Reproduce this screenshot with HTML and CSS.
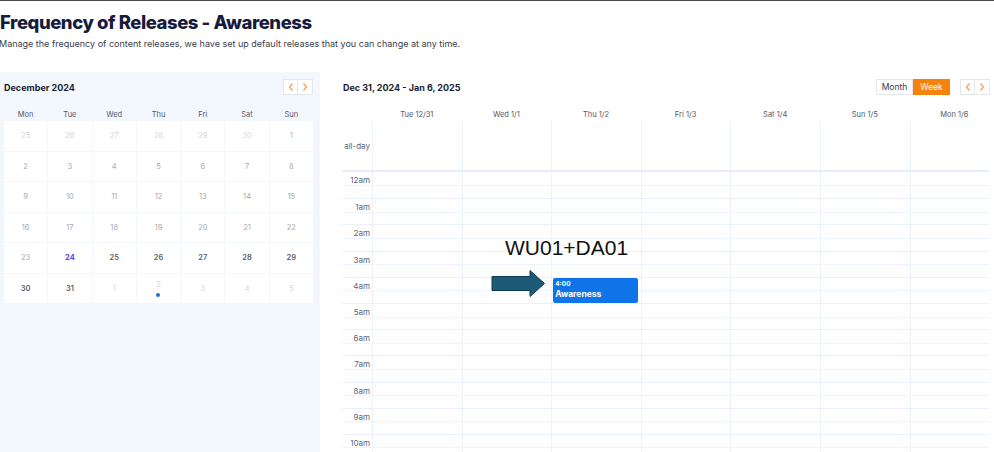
FILE: index.html
```html
<!DOCTYPE html>
<html lang="en">
<head>
    <meta charset="UTF-8">
    <title>Frequency of Releases - Awareness</title>
    <link rel="stylesheet" href="styles.css">
</head>
<body>
    <div class="page">
        <header class="intro">
            <h1>Frequency of Releases - Awareness</h1>
            <p>Manage the frequency of content releases, we have set up default releases that you can change at any time.</p>
        </header>

        <div class="layout">
            <!-- month picker -->
            <aside class="mini">
                <div class="mini-head">
                    <span class="mini-title">December 2024</span>
                    <div class="arrows">
                        <button class="arrow"><svg viewBox="0 0 10 10"><polyline points="6.5,1.5 3.5,5 6.5,8.5"/></svg></button>
                        <button class="arrow"><svg viewBox="0 0 10 10"><polyline points="3.5,1.5 6.5,5 3.5,8.5"/></svg></button>
                    </div>
                </div>
                <div class="mini-days">
                    <span>Mon</span><span>Tue</span><span>Wed</span><span>Thu</span><span>Fri</span><span>Sat</span><span>Sun</span>
                </div>
                <div class="mini-grid">
                    <div class="day other">25</div><div class="day other">26</div><div class="day other">27</div><div class="day other">28</div><div class="day other">29</div><div class="day other">30</div><div class="day past">1</div>
                    <div class="day past">2</div><div class="day past">3</div><div class="day past">4</div><div class="day past">5</div><div class="day past">6</div><div class="day past">7</div><div class="day past">8</div>
                    <div class="day past">9</div><div class="day past">10</div><div class="day past">11</div><div class="day past">12</div><div class="day past">13</div><div class="day past">14</div><div class="day past">15</div>
                    <div class="day past">16</div><div class="day past">17</div><div class="day past">18</div><div class="day past">19</div><div class="day past">20</div><div class="day past">21</div><div class="day past">22</div>
                    <div class="day past">23</div><div class="day today">24</div><div class="day">25</div><div class="day">26</div><div class="day">27</div><div class="day">28</div><div class="day">29</div>
                    <div class="day">30</div><div class="day">31</div><div class="day other">1</div><div class="day other has-event">2<i class="dot"></i></div><div class="day other">3</div><div class="day other">4</div><div class="day other">5</div>
                </div>
            </aside>

            <!-- week view -->
            <section class="week">
                <div class="week-head">
                    <span class="week-title">Dec 31, 2024 - Jan 6, 2025</span>
                    <div class="toggle">
                        <button class="view">Month</button>
                        <button class="view active">Week</button>
                    </div>
                    <div class="arrows">
                        <button class="arrow"><svg viewBox="0 0 10 10"><polyline points="6.5,1.5 3.5,5 6.5,8.5"/></svg></button>
                        <button class="arrow"><svg viewBox="0 0 10 10"><polyline points="3.5,1.5 6.5,5 3.5,8.5"/></svg></button>
                    </div>
                </div>

                <div class="cols">
                    <span></span><span>Tue 12/31</span><span>Wed 1/1</span><span>Thu 1/2</span><span>Fri 1/3</span><span>Sat 1/4</span><span>Sun 1/5</span><span>Mon 1/6</span>
                </div>

                <div class="grid">
                    <div class="row allday">
                        <span class="label">all-day</span><i></i><i></i><i></i><i></i><i></i><i></i><i></i>
                    </div>
                    <div class="hours">
                        <div class="row hour"><span class="label">12am</span><i></i><i></i><i></i><i></i><i></i><i></i><i></i></div>
                        <div class="row hour"><span class="label">1am</span><i></i><i></i><i></i><i></i><i></i><i></i><i></i></div>
                        <div class="row hour"><span class="label">2am</span><i></i><i></i><i></i><i></i><i></i><i></i><i></i></div>
                        <div class="row hour"><span class="label">3am</span><i></i><i></i><i></i><i></i><i></i><i></i><i></i></div>
                        <div class="row hour"><span class="label">4am</span><i></i><i></i>
                            <i class="slot">
                                <div class="event">
                                    <span class="event-time">4:00</span>
                                    <span class="event-name">Awareness</span>
                                </div>
                            </i>
                            <i></i><i></i><i></i><i></i></div>
                        <div class="row hour"><span class="label">5am</span><i></i><i></i><i></i><i></i><i></i><i></i><i></i></div>
                        <div class="row hour"><span class="label">6am</span><i></i><i></i><i></i><i></i><i></i><i></i><i></i></div>
                        <div class="row hour"><span class="label">7am</span><i></i><i></i><i></i><i></i><i></i><i></i><i></i></div>
                        <div class="row hour"><span class="label">8am</span><i></i><i></i><i></i><i></i><i></i><i></i><i></i></div>
                        <div class="row hour"><span class="label">9am</span><i></i><i></i><i></i><i></i><i></i><i></i><i></i></div>
                        <div class="row hour"><span class="label">10am</span><i></i><i></i><i></i><i></i><i></i><i></i><i></i></div>
                    </div>
                </div>

                <!-- callout drawn over the grid -->
                <div class="callout">WU01+DA01</div>
                <svg class="pointer" viewBox="0 0 55 29">
                    <polygon points="1,7.5 39,7.5 39,1.5 53.5,14.5 39,27.5 39,21.5 1,21.5"/>
                </svg>
            </section>
        </div>
    </div>
</body>
</html>
```

FILE: styles.css
```css
* {
    box-sizing: border-box;
}
body {
    margin: 0;
    width: 994px;
    height: 452px;
    overflow: hidden;
    background: #fff;
    font-family: Inter, "Open Sans", sans-serif;
    color: #333;
}
.page {
    border-top: 1px solid #4a4a4a;
}
.intro {
    padding: 9px 0 0 0;
    height: 71px;
}
h1 {
    margin: 0;
    font-size: 18.5px;
    font-weight: 800;
    letter-spacing: -0.45px;
    color: #161b3d;
    line-height: 24px;
}
.intro p {
    margin: 4px 0 0 -1px;
    font-size: 9px;
    line-height: 12px;
    color: #3b3d4c;
}
.layout {
    display: flex;
}
button {
    font-family: inherit;
    cursor: pointer;
}

/* mini month */
.mini {
    width: 320px;
    height: 380px;
    background: #f2f7fe;
    padding: 7px 7px 0 4px;
}
.mini-head {
    display: flex;
    align-items: center;
    justify-content: space-between;
    height: 16px;
}
.mini-title {
    font-size: 9px;
    font-weight: 700;
    color: #1b1d33;
}
.arrows {
    display: flex;
}
.arrow {
    width: 15px;
    height: 16px;
    padding: 0;
    background: #fff;
    border: 1px solid #e4e7ec;
    display: flex;
    align-items: center;
    justify-content: center;
}
.arrow + .arrow {
    border-left: none;
}
.arrow svg {
    width: 10px;
    height: 10px;
    fill: none;
    stroke: #f7a25a;
    stroke-width: 1.3;
}
.mini-days {
    display: grid;
    grid-template-columns: repeat(7, 1fr);
    gap: 1px;
    height: 26px;
    align-items: end;
    padding-bottom: 2px;
    width: 309px;
}
.mini-days span {
    text-align: center;
    font-size: 7.5px;
    color: #555a6e;
}
.mini-grid {
    display: grid;
    grid-template-columns: repeat(7, 1fr);
    grid-auto-rows: 29.5px;
    gap: 1px;
    width: 309px;
}
.day {
    background: #fff;
    display: flex;
    flex-direction: column;
    align-items: center;
    justify-content: center;
    font-size: 7.5px;
    font-weight: 600;
    color: #5e5e66;
}
.day.past {
    color: #a9a9ae;
    font-weight: 400;
}
.day.other {
    color: #d6d6da;
    font-weight: 400;
}
.day.today {
    color: #5a48e0;
    font-weight: 700;
}
.day.has-event {
    justify-content: flex-start;
    padding-top: 6px;
}
.dot {
    width: 4px;
    height: 4px;
    margin-top: 4px;
    border-radius: 50%;
    background: #1a6fe6;
}

/* week view */
.week {
    position: relative;
    flex: 1;
    padding: 7px 0 0 22px;
}
.week-head {
    display: flex;
    align-items: center;
    height: 16px;
    width: 648px;
}
.week-title {
    font-size: 9px;
    font-weight: 700;
    color: #1b1d33;
    margin-left: 1px;
    flex: 1;
}
.toggle {
    display: flex;
    margin-right: 10px;
}
.view {
    width: 37px;
    height: 16px;
    padding: 0;
    font-size: 8.5px;
    background: #fff;
    color: #3a3a46;
    border: 1px solid #e6e6ea;
}
.view.active {
    background: #f5820b;
    border-color: #f5820b;
    color: #fff;
}
.cols {
    display: grid;
    grid-template-columns: 30px repeat(7, 89.6px);
    height: 26px;
    align-items: end;
    padding-bottom: 2px;
}
.cols span {
    text-align: center;
    font-size: 7.5px;
    color: #55586a;
}
.grid {
    width: 647px;
    overflow: hidden;
}
.row {
    display: grid;
    grid-template-columns: 30px repeat(7, 89.6px);
}
.row i {
    border-left: 1px solid #edf3fd;
    position: relative;
}
.label {
    text-align: right;
    padding-right: 2px;
    font-size: 8px;
    color: #5f6275;
}
.allday {
    height: 51px;
    border-bottom: 2px solid #e6eefb;
}
.allday .label {
    align-self: center;
    padding-top: 1px;
}
.hour {
    height: 26.2px;
    border-top: 1px solid #eaf1fc;
    position: relative;
}
.hour:first-child {
    border-top: none;
}
.hour::after {
    content: "";
    position: absolute;
    left: 0;
    right: 0;
    top: 12.6px;
    border-top: 1px dotted #e3e9f4;
}
.hour .label {
    padding-top: 3px;
    line-height: 10px;
}
.event {
    position: absolute;
    z-index: 2;
    top: 0;
    left: 1px;
    right: 3px;
    height: 25px;
    background: #0f74e8;
    border-radius: 2px;
    padding: 2px 2px 0 2px;
    display: flex;
    flex-direction: column;
    color: #fff;
    font-style: normal;
    font-weight: 700;
}
.event-time {
    font-size: 6.5px;
    line-height: 9px;
}
.event-name {
    font-size: 8.5px;
    line-height: 11px;
}

/* annotation layer */
.callout {
    position: absolute;
    left: 185px;
    top: 164px;
    font-family: "Liberation Sans", Arial, sans-serif;
    font-size: 21px;
    color: #111;
}
.pointer {
    position: absolute;
    left: 171px;
    top: 197px;
    width: 55px;
    height: 29px;
}
.pointer polygon {
    fill: #1d5a78;
    stroke: #133a50;
    stroke-width: 1;
}
```
